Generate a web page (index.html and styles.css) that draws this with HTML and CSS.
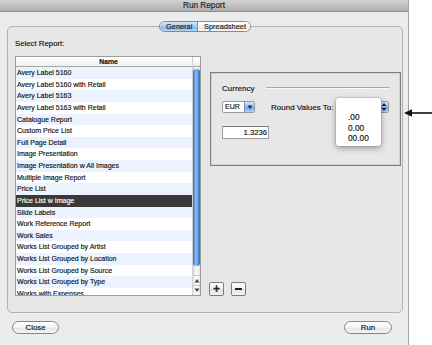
FILE: index.html
```html
<!DOCTYPE html>
<html lang="en">
<head>
    <meta charset="UTF-8">
    <meta name="viewport" content="width=device-width, initial-scale=1.0">
    <title>Run Report</title>
    <link rel="stylesheet" href="styles.css">
</head>
<body>
    <div class="window">
        <div class="titlebar">Run Report</div>

        <div class="tabbox">
            <div class="tabs">
                <span class="tab tab-active">General</span>
                <span class="tab">Spreadsheet</span>
            </div>

            <div class="tab-body">
                <div class="left-column">
                    <p class="label">Select Report:</p>

                    <div class="list">
                        <div class="list-main">
                            <div class="list-header">Name</div>
                            <div class="rows">
                                <div class="row">Avery Label 5160</div>
                                <div class="row">Avery Label 5160 with Retail</div>
                                <div class="row">Avery Label 5163</div>
                                <div class="row">Avery Label 5163 with Retail</div>
                                <div class="row">Catalogue Report</div>
                                <div class="row">Custom Price List</div>
                                <div class="row">Full Page Detail</div>
                                <div class="row">Image Presentation</div>
                                <div class="row">Image Presentation w All Images</div>
                                <div class="row">Multiple Image Report</div>
                                <div class="row">Price List</div>
                                <div class="row row-selected">Price List w Image</div>
                                <div class="row">Slide Labels</div>
                                <div class="row">Work Reference Report</div>
                                <div class="row">Work Sales</div>
                                <div class="row">Works List Grouped by Artist</div>
                                <div class="row">Works List Grouped by Location</div>
                                <div class="row">Works List Grouped by Source</div>
                                <div class="row">Works List Grouped by Type</div>
                                <div class="row">Works with Expenses</div>
                            </div>
                        </div>

                        <div class="scrollbar">
                            <div class="scroll-corner"></div>
                            <div class="scroll-track">
                                <div class="scroll-thumb"></div>
                            </div>
                            <div class="scroll-arrow">
                                <svg width="6" height="9" viewBox="0 0 6 9"><polygon points="3,3 5.5,6.5 0.5,6.5" fill="#444"/></svg>
                            </div>
                            <div class="scroll-arrow">
                                <svg width="6" height="9" viewBox="0 0 6 9"><polygon points="0.5,2.5 5.5,2.5 3,6" fill="#444"/></svg>
                            </div>
                        </div>
                    </div>
                </div>

                <div class="right-column">
                    <div class="panel">
                        <div class="group-title">
                            <span>Currency</span>
                            <span class="rule"></span>
                        </div>

                        <div class="controls">
                            <div class="popup popup-eur">
                                <span class="popup-value">EUR</span>
                                <span class="popup-button">
                                    <svg width="6" height="6" viewBox="0 0 6 6"><polygon points="0.5,1.5 5.5,1.5 3,5" fill="#1d2a44"/></svg>
                                </span>
                            </div>

                            <span class="round-label">Round Values To:</span>

                            <div class="popup popup-round">
                                <span class="popup-value"></span>
                                <span class="popup-button">
                                    <svg width="6" height="10" viewBox="0 0 6 10"><polygon points="3,1 5.5,4 0.5,4" fill="#1d2a44"/><polygon points="0.5,6 5.5,6 3,9" fill="#1d2a44"/></svg>
                                </span>

                                <div class="menu">
                                    <div class="menu-item"></div>
                                    <div class="menu-item">.00</div>
                                    <div class="menu-item">0.00</div>
                                    <div class="menu-item">00.00</div>
                                </div>
                            </div>
                        </div>

                        <div class="rate-field">1.3236</div>
                    </div>

                    <div class="plus-minus">
                        <button class="small-button">+</button>
                        <button class="small-button"><span class="minus-bar"></span></button>
                    </div>
                </div>
            </div>
        </div>

        <div class="footer">
            <button class="pill-button close-button">Close</button>
            <button class="pill-button run-button">Run</button>
        </div>
    </div>

    <svg class="pointer-arrow" width="30" height="10" viewBox="0 0 30 10">
        <polygon points="1,5 9,1.2 9,8.8" fill="#111"/>
        <line x1="8" y1="5" x2="30" y2="5" stroke="#111" stroke-width="1.6"/>
    </svg>
</body>
</html>
```

FILE: styles.css
```css
body {
    margin: 0;
    background-color: white;
    font-family: "Liberation Sans", Arial, sans-serif;
    color: #111;
    -webkit-text-stroke: 0.15px currentColor;
}

.window {
    width: 408px;
    height: 345px;
    background-color: #ececec;
    border-right: 1px solid #a2a2a2;
    overflow: hidden;
}

.titlebar {
    height: 11px;
    line-height: 11px;
    border-bottom: 1px solid #8a8a8a;
    background: linear-gradient(#d2d2d2, #aeaeae);
    text-align: center;
    font-size: 8.2px;
    color: #1c1c1c;
}

/* tab view */
.tabbox {
    margin: 14px 5px 0 7px;
    height: 287px;
    box-sizing: border-box;
    border: 1px solid #b2b2b2;
    border-radius: 5px;
    background-color: #e7e7e7;
}

.tabs {
    display: flex;
    width: fit-content;
    margin: -6px auto 0;
    height: 11px;
    box-sizing: border-box;
    border: 1px solid #8a8a8a;
    border-radius: 6px;
    overflow: hidden;
}

.tab {
    font-size: 7.4px;
    line-height: 9px;
    padding: 0 4px 0 6px;
    background: linear-gradient(#ffffff, #f4f4f4 50%, #e6e6e6 51%, #f7f7f7);
    color: #1a1a1a;
}

.tab-active {
    width: 27px;
    border-right: 1px solid #7c8ea8;
    background: linear-gradient(#d4e7fb, #a3caf4 50%, #78b0ee 51%, #b2d6f9);
}

.tab-body {
    display: flex;
    gap: 9px;
    padding: 6px 1px 0 7px;
}

.label {
    margin: 0 0 6px;
    font-size: 7.8px;
    line-height: 12px;
}

/* report list */
.list {
    display: flex;
    width: 186px;
    height: 240px;
    box-sizing: border-box;
    border: 1px solid #9c9c9c;
    background-color: white;
}

.list-main {
    flex: 1;
    display: flex;
    flex-direction: column;
    overflow: hidden;
}

.list-header {
    height: 10px;
    box-sizing: border-box;
    border-bottom: 1px solid #a8a8a8;
    background: linear-gradient(#ffffff, #efefef);
    padding-left: 9px;
    text-align: center;
    font-size: 6.8px;
    font-weight: bold;
    line-height: 9px;
}

.rows {
    flex: 1;
    overflow: hidden;
}

.row {
    height: 11.63px;
    line-height: 11.63px;
    padding-left: 1px;
    font-size: 7px;
    white-space: nowrap;
}

.row:nth-child(odd) {
    background-color: #edf3fe;
}

.row-selected {
    background-color: #393939;
    color: white;
}

.scrollbar {
    width: 7px;
    display: flex;
    flex-direction: column;
    border-left: 1px solid #cfcfcf;
}

.scroll-corner {
    height: 10px;
    box-sizing: border-box;
    border-bottom: 1px solid #a8a8a8;
    background: linear-gradient(#ffffff, #efefef);
}

.scroll-track {
    flex: 1;
    padding-top: 2px;
    background: linear-gradient(to right, #dcdcdc, #f9f9f9 50%, #e4e4e4);
}

.scroll-thumb {
    height: 197px;
    border-radius: 3px;
    background: linear-gradient(to right, #2f6cc4, #8fc0f2 40%, #5d9de6 70%, #2b63b8);
}

.scroll-arrow {
    height: 9px;
    display: flex;
    justify-content: center;
    border-top: 1px solid #c4c4c4;
    background: linear-gradient(to right, #e6e6e6, #ffffff 50%, #e6e6e6);
}

/* currency panel */
.right-column {
    flex: 1;
    display: flex;
    flex-direction: column;
    justify-content: space-between;
    padding-top: 34px;
}

.panel {
    height: 94px;
    box-sizing: border-box;
    border: 1px solid #7e7e7e;
    box-shadow: inset 0 0 0 1px #d2d2d2;
    padding: 10px 11px 0 11px;
}

.group-title {
    display: flex;
    align-items: center;
    height: 10px;
    font-size: 8px;
}

.rule {
    flex: 1;
    margin-left: 12px;
    border-top: 1px solid #a9a9a9;
    border-bottom: 1px solid #f8f8f8;
}

.controls {
    display: flex;
    align-items: center;
    margin-top: 8px;
    height: 12px;
}

.popup {
    display: flex;
    height: 12px;
    box-sizing: border-box;
    border: 1px solid #9a9a9a;
    border-radius: 2px;
    background-color: white;
}

.popup-eur {
    width: 33px;
}

.popup-round {
    position: relative;
    width: 52px;
    margin-left: auto;
}

.popup-value {
    flex: 1;
    padding-left: 2px;
    font-size: 7px;
    line-height: 10px;
}

.popup-button {
    width: 9px;
    display: flex;
    align-items: center;
    justify-content: center;
    border-left: 1px solid #6d8fc0;
    border-radius: 0 2px 2px 0;
    background: linear-gradient(#cfe4fb, #93c2f2 50%, #6aa6ec 51%, #a9d2f8);
}

.round-label {
    margin-left: 16px;
    font-size: 8px;
}

.menu {
    position: absolute;
    left: -2px;
    top: -4px;
    width: 45px;
    padding: 4px 0 2px;
    background-color: white;
    border-radius: 3px;
    box-shadow: 0 2px 6px rgba(0, 0, 0, 0.35), 0 0 0 1px rgba(0, 0, 0, 0.08);
}

.menu-item {
    height: 10.4px;
    line-height: 10.4px;
    padding-left: 12px;
    font-size: 8.3px;
    color: #111;
}

.rate-field {
    margin-top: 13px;
    width: 47px;
    height: 13px;
    box-sizing: border-box;
    border: 1px solid #a0a0a0;
    border-top-color: #7a7a7a;
    background-color: white;
    padding-right: 1px;
    text-align: right;
    font-size: 7.7px;
    line-height: 11px;
}

.plus-minus {
    display: flex;
    gap: 7px;
    margin-left: -1px;
}

.small-button {
    width: 15px;
    height: 14px;
    padding: 0;
    display: flex;
    align-items: center;
    justify-content: center;
    border: 1px solid #7c7c7c;
    border-radius: 2px;
    background: linear-gradient(#ffffff, #f1f1f1 50%, #e2e2e2 51%, #f3f3f3);
    font-family: "Liberation Sans", Arial, sans-serif;
    font-size: 12px;
    font-weight: bold;
    line-height: 12px;
    color: #222;
}

.minus-bar {
    width: 7px;
    height: 2px;
    background-color: #222;
}

/* bottom buttons */
.footer {
    display: flex;
    justify-content: space-between;
    padding: 8px 16px 0 12px;
}

.pill-button {
    height: 13px;
    padding: 0;
    border: 1px solid #858585;
    border-radius: 7px;
    background: linear-gradient(#ffffff, #f3f3f3 50%, #e4e4e4 51%, #f6f6f6);
    font-family: "Liberation Sans", Arial, sans-serif;
    font-size: 7.8px;
    line-height: 11px;
    color: #111;
}

.close-button {
    width: 47px;
}

.run-button {
    width: 48px;
}

.pointer-arrow {
    position: absolute;
    left: 403px;
    top: 108px;
}
```
